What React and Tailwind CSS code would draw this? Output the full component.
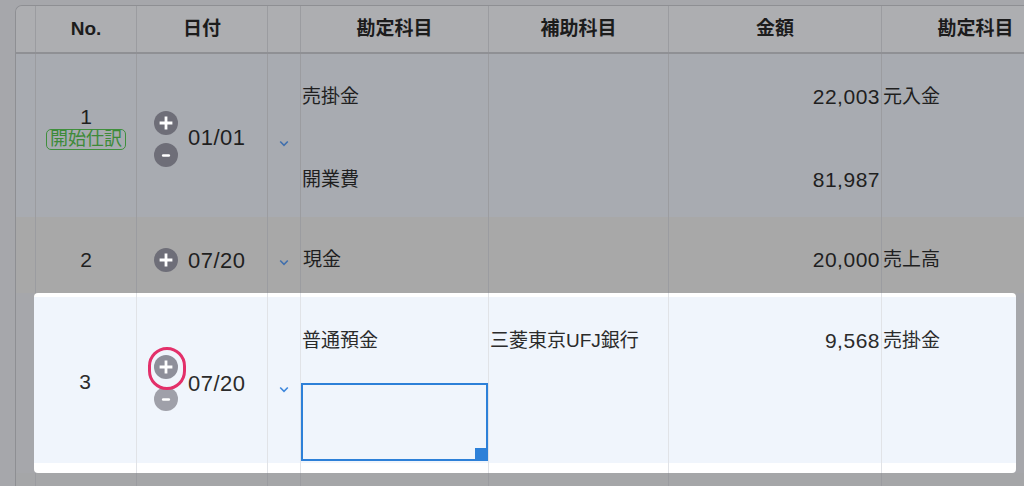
import React from "react";

const FONT = "font-['Liberation_Sans','Noto_Sans_CJK_JP',sans-serif]";
const GRID = "grid grid-cols-[101px_131px_33px_188px_180px_213px_188px]";
const CARD_GRID = "grid grid-cols-[103px_131px_33px_188px_180px_213px_134px]";
const LINE = "border-r border-[#9b9ca0]";

function Circle({ kind, fill }) {
  return (
    <svg width="24" height="24" viewBox="0 0 24 24" className="block">
      <circle cx="12" cy="12" r="12" fill={fill} />
      {kind === "plus" ? (
        <path d="M12 5.6v12.8M5.6 12h12.8" stroke="#fff" strokeWidth="2.8" />
      ) : (
        <path d="M9.2 12.5h5.6" stroke="#fff" strokeWidth="2.6" strokeLinecap="round" />
      )}
    </svg>
  );
}

function Chevron({ color }) {
  return (
    <svg width="10" height="7" viewBox="0 0 10 7" className="block">
      <path d="M1.2 1.5l3.8 3.8 3.8-3.8" fill="none" stroke={color} strokeWidth="1.6" />
    </svg>
  );
}

function Narrow() {
  return <div className={`w-[20px] shrink-0 ${LINE}`} />;
}

function CardCell({ last, children, className = "" }) {
  return (
    <div className={`flex flex-col ${last ? "" : "border-r border-[#e1e3e7]"}`}>
      <div className="h-[4px]" />
      <div className={`h-[166px] bg-[#f0f5fc] ${className}`}>{children}</div>
      <div className="h-[10px]" />
    </div>
  );
}

export default function App() {
  const headers = ["No.", "日付", "", "勘定科目", "補助科目", "金額", "勘定科目"];
  const dimText = "text-[#1f1f1f]";
  const cardText = "text-[#2b2b2b]";
  return (
    <div className={`w-[1024px] h-[486px] overflow-hidden bg-[#a6a7ab] pl-[15px] pt-[5px] ${FONT}`}>
      <div className="w-[1100px] border-l border-t border-[#8e8f93] rounded-tl-[7px] overflow-hidden">
        {/* header */}
        <div className="flex h-[48px] bg-[#adaeb1] border-b-2 border-[#8f9094]">
          <Narrow />
          <div className={GRID}>
            {headers.map((h, i) => (
              <div
                key={i}
                className={`${LINE} flex items-center justify-center text-[19px] font-bold text-[#1c1c1c]`}
              >
                {h}
              </div>
            ))}
          </div>
        </div>

        {/* row 1 */}
        <div className={`flex h-[163px] bg-[#a8abb1] ${dimText}`}>
          <Narrow />
          <div className={GRID}>
            <div className={`${LINE} flex flex-col items-center justify-center pb-[16px]`}>
              <div className="text-[21px] leading-[22px]">1</div>
              <div className="mt-[1px] border-[1.5px] border-[#3f8f3c] rounded-[5px] px-[3px] text-[18px] leading-[19px] text-[#3d8a38]">
                開始仕訳
              </div>
            </div>
            <div className={`${LINE} flex items-center pl-[17px] gap-[10px] pt-[7px]`}>
              <div className="flex flex-col gap-[8px]">
                <Circle kind="plus" fill="#6e6e78" />
                <Circle kind="minus" fill="#6e6e78" />
              </div>
              <div className="text-[22px] tracking-[0.5px] pb-[3px]">01/01</div>
            </div>
            <div className={`${LINE} flex items-center justify-center pt-[15px]`}>
              <Chevron color="#4270ad" />
            </div>
            <div className={`${LINE} flex flex-col text-[19px]`}>
              <div className="h-[86px] flex items-center pl-[1px]">売掛金</div>
              <div className="h-[77px] flex items-center pl-[1px] pt-[3px]">開業費</div>
            </div>
            <div className={LINE} />
            <div className={`${LINE} flex flex-col text-[21px] tracking-[0.5px]`}>
              <div className="h-[86px] flex items-center justify-end pr-[1px]">22,003</div>
              <div className="h-[77px] flex items-center justify-end pr-[1px] pt-[3px]">81,987</div>
            </div>
            <div className={`${LINE} flex flex-col text-[19px]`}>
              <div className="h-[86px] flex items-center pl-[1px]">元入金</div>
            </div>
          </div>
        </div>

        {/* row 2 */}
        <div className={`flex h-[80px] bg-[#a8a8a8] ${dimText}`}>
          <Narrow />
          <div className={GRID}>
            <div className={`${LINE} flex items-center justify-center pt-[6px] text-[21px]`}>2</div>
            <div className={`${LINE} flex items-center pl-[17px] gap-[10px] pt-[6px]`}>
              <Circle kind="plus" fill="#6e6e78" />
              <div className="text-[22px] tracking-[0.5px]">07/20</div>
            </div>
            <div className={`${LINE} flex items-center justify-center pt-[10px]`}>
              <Chevron color="#4270ad" />
            </div>
            <div className={`${LINE} flex items-center pl-[2px] pt-[6px] text-[19px]`}>現金</div>
            <div className={LINE} />
            <div className={`${LINE} flex items-center justify-end pr-[1px] pt-[6px] text-[21px] tracking-[0.5px]`}>
              20,000
            </div>
            <div className={`${LINE} flex items-center pl-[1px] pt-[6px] text-[19px]`}>売上高</div>
          </div>
        </div>

        {/* row 3 (highlighted) */}
        <div className="relative flex h-[180px] -mt-[4px]">
          <div className="w-[18px] shrink-0 bg-[#a6a7ab]" />
          <div className={`w-[982px] shrink-0 bg-white rounded-[4px] overflow-hidden ${CARD_GRID} ${cardText}`}>
            <CardCell className="flex items-center justify-center pt-[4px] text-[21px]">3</CardCell>
            <CardCell className="flex items-center pl-[17px] gap-[10px] pt-[6px]">
              <div className="flex flex-col gap-[8px]">
                <div className="relative">
                  <Circle kind="plus" fill="#8e8f9a" />
                  <div className="absolute left-[-6px] top-[-8px] w-[38px] h-[43px] rounded-full border-[3px] border-[#e3306a]" />
                </div>
                <Circle kind="minus" fill="#9fa0a9" />
              </div>
              <div className="text-[22px] tracking-[0.5px]">07/20</div>
            </CardCell>
            <CardCell className="flex items-center justify-center pt-[18px]">
              <Chevron color="#3f88dc" />
            </CardCell>
            <CardCell className="flex flex-col text-[19px]">
              <div className="h-[86px] flex items-center pl-[1px] pt-[2px]">普通預金</div>
              <div className="relative h-[78px] w-full border-2 border-[#2d80d8]">
                <div className="absolute right-0 bottom-0 w-[11px] h-[11px] bg-[#2d80d8]" />
              </div>
            </CardCell>
            <CardCell className="flex flex-col text-[19px]">
              <div className="h-[86px] flex items-center pl-[1px] pt-[2px]">三菱東京UFJ銀行</div>
            </CardCell>
            <CardCell className="flex flex-col text-[21px] tracking-[0.5px]">
              <div className="h-[86px] flex items-center justify-end pr-[1px] pt-[2px]">9,568</div>
            </CardCell>
            <CardCell last className="flex flex-col text-[19px]">
              <div className="h-[86px] flex items-center pl-[1px] pt-[2px]">売掛金</div>
            </CardCell>
          </div>
          <div className="flex-1 bg-[#a6a7ab]" />
        </div>

        {/* next row (dimmed) */}
        <div className="flex h-[13px] bg-[#a5a6a8]">
          <Narrow />
          <div className={GRID}>
            {headers.map((_, i) => (
              <div key={i} className={LINE} />
            ))}
          </div>
        </div>
      </div>
    </div>
  );
}
